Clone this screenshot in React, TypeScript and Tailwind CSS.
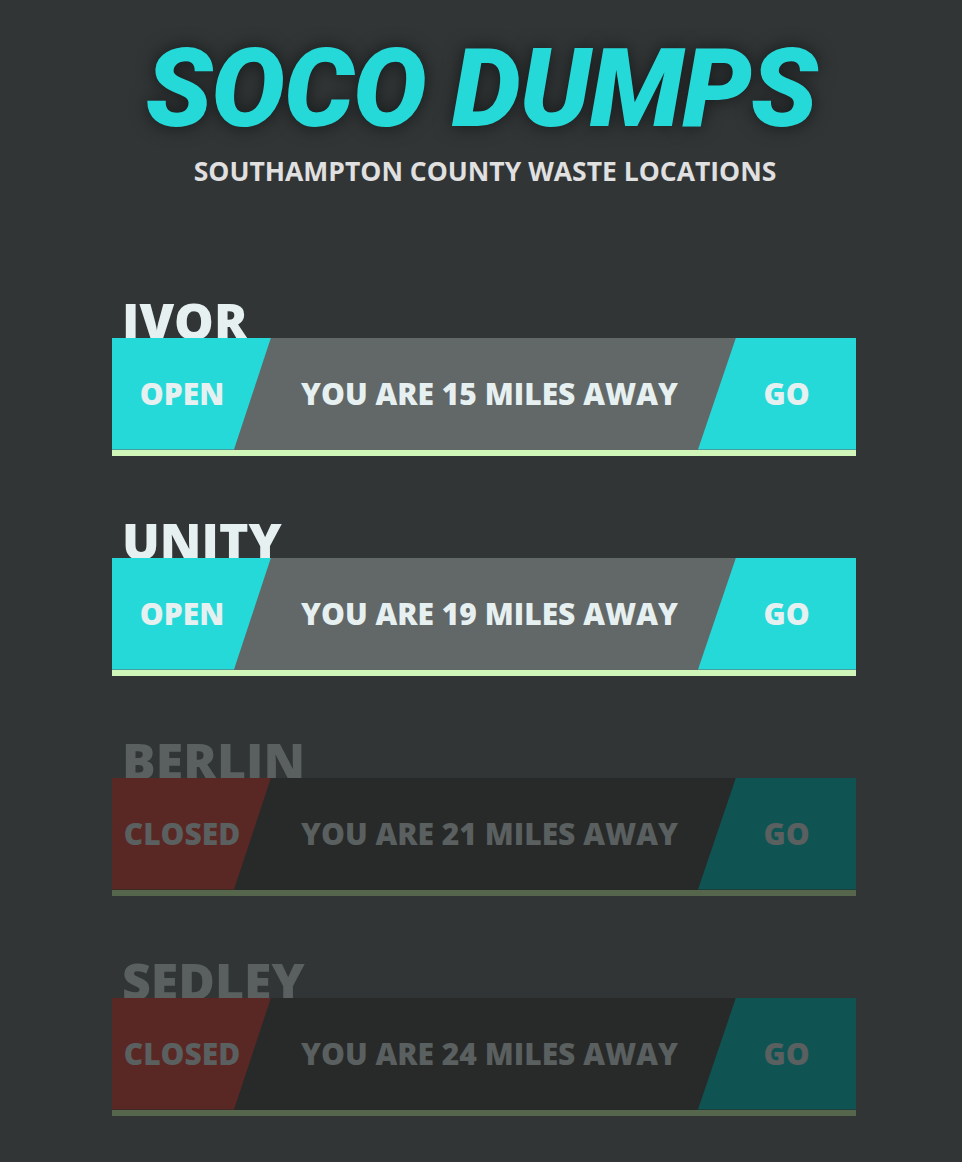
import React from "react";

type Dump = { name: string; open: boolean; miles: number };

const dumps: Dump[] = [
  { name: "IVOR", open: true, miles: 15 },
  { name: "UNITY", open: true, miles: 19 },
  { name: "BERLIN", open: false, miles: 21 },
  { name: "SEDLEY", open: false, miles: 24 },
];

const DumpRow: React.FC<{ dump: Dump }> = ({ dump }) => {
  const { open } = dump;
  return (
    <div className="flex flex-col">
      <h2
        className={`relative z-0 pl-[10px] text-[50px] leading-none font-extrabold -mb-[8px] ${
          open ? "text-[#e6f0f0]" : "text-[#5a5f5f]"
        }`}
      >
        {dump.name}
      </h2>
      <div
        className={`relative z-10 flex h-[118px] border-b-[6px] text-[30px] font-extrabold ${
          open
            ? "bg-[#626767] border-[#d0f5b8] text-[#e6f0f0]"
            : "bg-[#282a29] border-[#56664c] text-[#5a5f5f]"
        }`}
      >
        <div
          className={`flex w-[159px] items-center justify-center pr-[19px] [clip-path:polygon(0_0,100%_0,calc(100%-37px)_100%,0_100%)] ${
            open ? "bg-[#26d9d9]" : "bg-[#5a2824]"
          }`}
        >
          {open ? "OPEN" : "CLOSED"}
        </div>
        <div className="flex flex-1 items-center justify-center pl-[10px]">
          YOU ARE {dump.miles} MILES AWAY
        </div>
        <div
          className={`flex w-[158px] items-center justify-center pl-[19px] [clip-path:polygon(38px_0,100%_0,100%_100%,0_100%)] ${
            open ? "bg-[#26d9d9]" : "bg-[#0f5453]"
          }`}
        >
          GO
        </div>
      </div>
    </div>
  );
};

export default function App() {
  return (
    <div
      className="min-h-screen bg-[#313536] pb-[46px]"
      style={{ fontFamily: '"Open Sans", "Liberation Sans", sans-serif' }}
    >
      <header className="flex flex-col items-center pt-[34px]">
        <h1
          className="text-[110px] leading-none font-black italic text-[#26d9d9] tracking-[-1px] [text-shadow:0_0_18px_rgba(0,0,0,0.55)]"
          style={{ fontFamily: 'Roboto, "Liberation Sans", sans-serif' }}
        >
          SOCO DUMPS
        </h1>
        <p className="mt-[14px] pl-[8px] text-[26.5px] leading-none font-bold text-[#e0e0e0]">
          SOUTHAMPTON COUNTY WASTE LOCATIONS
        </p>
      </header>
      <main className="ml-[112px] mt-[111px] flex w-[744px] flex-col gap-[60px]">
        {dumps.map((d) => (
          <DumpRow key={d.name} dump={d} />
        ))}
      </main>
    </div>
  );
}
